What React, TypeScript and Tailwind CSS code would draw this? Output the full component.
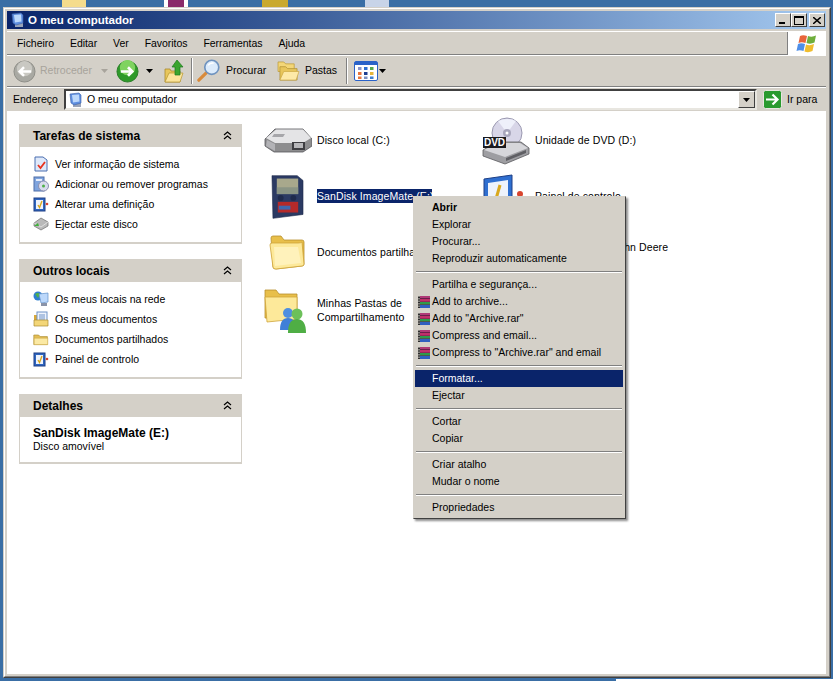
import type { ReactNode } from "react";

const font = "font-['Liberation_Sans',Arial,sans-serif]";

const Computer = ({ s = 16 }: { s?: number }) => (
  <svg width={s} height={s} viewBox="0 0 16 16">
    <rect x="5" y="11" width="8" height="4" fill="#9aa4b8" />
    <path d="M2 2 L11 1 L13 3 L13 11 L6 13 L3 11 Z" fill="#5f8fe0" stroke="#3a5fa8" strokeWidth=".6" />
    <path d="M4 3 L11 2.5 L11.5 9.5 L5 10.5 Z" fill="#bcd8fb" />
  </svg>
);

const BackIcon = () => (
  <svg width="23" height="23" viewBox="0 0 24 24">
    <circle cx="12" cy="12" r="11" fill="#a9a9a3" stroke="#8c8c86" />
    <circle cx="12" cy="9" r="8" fill="#c9c8c2" />
    <path d="M19 12H7M11.5 7.5 7 12l4.5 4.5" stroke="#fff" strokeWidth="2.6" fill="none" />
  </svg>
);

const ForwardIcon = () => (
  <svg width="23" height="23" viewBox="0 0 24 24">
    <circle cx="12" cy="12" r="11" fill="#2f9a2a" stroke="#2a7d28" />
    <circle cx="12" cy="8" r="8" fill="#7fd35f" />
    <path d="M5 12h12M12.5 7.5 17 12l-4.5 4.5" stroke="#fff" strokeWidth="2.8" fill="none" />
  </svg>
);

const FolderSmall = ({ w = 20, h = 16 }: { w?: number; h?: number }) => (
  <svg width={w} height={h} viewBox="0 0 20 16">
    <path d="M1 3h6l2 2h9v10H1Z" fill="#e3bd55" stroke="#a98a2f" strokeWidth=".8" />
    <path d="M1.5 7h17v8h-17Z" fill="#fbe9a4" stroke="#c9a440" strokeWidth=".6" />
  </svg>
);

const UpIcon = () => (
  <svg width="20" height="24" viewBox="0 0 20 24">
    <path d="M1 10h5l1 2h9v11H1Z" fill="#e8c65c" stroke="#a98a2f" strokeWidth=".8" />
    <path d="M1 23 5 14h14l-3 9Z" fill="#fbe39a" stroke="#b8962f" strokeWidth=".7" />
    <path d="M13 1 19 8h-3v8h-5V8H8Z" fill="#3aa52f" stroke="#1d7a1d" strokeWidth=".7" />
  </svg>
);

const SearchIcon = () => (
  <svg width="24" height="24" viewBox="0 0 26 26">
    <path d="M10 15 2 23" stroke="#d98a3a" strokeWidth="3.4" strokeLinecap="round" />
    <circle cx="16" cy="9" r="7.6" fill="#dcebfb" stroke="#6f93bf" strokeWidth="1.8" />
    <path d="M12 7q2-3 6-2.5" stroke="#fff" strokeWidth="1.6" fill="none" />
  </svg>
);

const FoldersIcon = () => (
  <svg width="23" height="20" viewBox="0 0 24 21">
    <path d="M1 1h6l2 2h9v8H1Z" fill="#f3d678" stroke="#b8962f" strokeWidth=".7" />
    <path d="M3 6h6l2 2h10v12H3Z" fill="#e8c65c" stroke="#a98a2f" strokeWidth=".7" />
    <path d="M3 20 7 11h16l-3 9Z" fill="#fde9a8" stroke="#c9a440" strokeWidth=".7" />
  </svg>
);

const ViewsIcon = () => (
  <svg width="24" height="20" viewBox="0 0 24 20">
    <rect x=".5" y=".5" width="23" height="19" rx="1.5" fill="#fff" stroke="#2a62c8" />
    <rect x="1" y="1" width="22" height="3" fill="#2a62c8" />
    <rect x="4" y="6" width="3.5" height="3" fill="#8a93c9" />
    <rect x="10" y="6" width="3.5" height="3" fill="#2f6fd0" />
    <rect x="16" y="6" width="3.5" height="3" fill="#56a84f" />
    <rect x="4" y="11" width="3.5" height="3" fill="#e8743b" />
    <rect x="10" y="11" width="3.5" height="3" fill="#1f3f8f" />
    <rect x="16" y="11" width="3.5" height="3" fill="#e5b53a" />
    <rect x="4" y="15.5" width="3.5" height="2.5" fill="#e8743b" />
    <rect x="10" y="15.5" width="3.5" height="2.5" fill="#7c8fc0" />
    <rect x="16" y="15.5" width="3.5" height="2.5" fill="#3f7fd0" />
  </svg>
);

const WinFlag = () => (
  <svg width="22" height="20" viewBox="0 0 22 20">
    <path d="M4 2q3-1.500 7 0l-1.500 7q-4-1.500-7 0Z" fill="#e8643a" />
    <path d="M12 2q4 1.500 8-.5l-1.500 7q-4 2-8 .5Z" fill="#6fae3c" />
    <path d="M2 10q3-1.500 7 0l-1.500 7q-4-1.500-7 0Z" fill="#4f8fe8" />
    <path d="M10 10.500q4 1.500 8-.5l-1.500 7q-4 2-8 .5Z" fill="#f0bd2e" />
  </svg>
);

const GoIcon = () => (
  <svg width="19" height="19" viewBox="0 0 19 19">
    <rect x=".5" y=".5" width="18" height="18" rx="2" fill="#2a9a2f" stroke="#e8e6e0" />
    <path d="M3 9.500h11M9.500 4.500l5 5-5 5" stroke="#fff" strokeWidth="2.200" fill="none" />
  </svg>
);

const Chevrons = () => (
  <svg width="9" height="9" viewBox="0 0 9 9">
    <path d="M1 4 4.500 1 8 4M1 8l3.500-3L8 8" stroke="#000" strokeWidth="1.200" fill="none" />
  </svg>
);

const Caret = ({ c = "#000" }: { c?: string }) => (
  <svg width="7" height="4" viewBox="0 0 7 4">
    <path d="M0 0h7L3.500 4Z" fill={c} />
  </svg>
);

const TaskIcon = ({ kind }: { kind: string }) => {
  if (kind === "info")
    return (
      <svg width="16" height="16" viewBox="0 0 16 16">
        <path d="M2 1h8l4 3v11H2Z" fill="#dfe9fa" stroke="#4a6fb0" />
        <path d="M5 9l2.500 3L12 6" stroke="#e8321e" strokeWidth="1.800" fill="none" />
      </svg>
    );
  if (kind === "add")
    return (
      <svg width="16" height="16" viewBox="0 0 16 16">
        <rect x="1" y="1" width="10" height="14" fill="#7fa4de" stroke="#4f6ea8" />
        <rect x="3" y="3" width="6" height="2" fill="#e8eefa" />
        <circle cx="10.500" cy="10" r="5" fill="#d8dcec" stroke="#8a8fb0" />
        <circle cx="10.500" cy="10" r="1.500" fill="#4fb04a" />
      </svg>
    );
  if (kind === "panel")
    return (
      <svg width="16" height="16" viewBox="0 0 16 16">
        <rect x="1" y="2" width="11" height="13" fill="#2f66c0" stroke="#1e3f85" />
        <rect x="3" y="4" width="7" height="9" fill="#eef3fc" />
        <path d="M5 9l1.500 2.500L9 5" stroke="#d9a81e" strokeWidth="1.400" fill="none" />
        <circle cx="14" cy="8" r="1.300" fill="#d8452e" />
      </svg>
    );
  if (kind === "eject")
    return (
      <svg width="16" height="14" viewBox="0 0 16 14">
        <path d="M1 6 8 1l7 4v4l-7 4-7-4Z" fill="#b9b9b9" stroke="#6f6f6f" strokeWidth=".7" />
        <path d="M1 6l7 4 7-5" stroke="#eee" fill="none" strokeWidth=".7" />
        <path d="M1 9l4-3 1 3Z" fill="#3fb03a" />
      </svg>
    );
  if (kind === "net")
    return (
      <svg width="16" height="16" viewBox="0 0 16 16">
        <circle cx="5" cy="5" r="4.500" fill="#2f7fd0" />
        <path d="M2 3q3-2 5 0l-2 4Z" fill="#4fb04a" />
        <path d="M6 3l9-1v9l-7 1Z" fill="#bcd8fb" stroke="#5f8fc8" strokeWidth=".7" />
        <rect x="8" y="12" width="6" height="3" fill="#8a93a8" />
      </svg>
    );
  if (kind === "docs")
    return (
      <svg width="16" height="16" viewBox="0 0 16 16">
        <path d="M1 4h3v11H1Z" fill="#d9a93a" />
        <rect x="4" y="1" width="10" height="11" fill="#eef3fc" stroke="#6f93c8" />
        <path d="M6 4h6M6 6h6M6 8h6" stroke="#6f93c8" />
        <path d="M1 9h14v6H1Z" fill="#f3d678" stroke="#a98a2f" strokeWidth=".7" />
      </svg>
    );
  return <FolderSmall w={16} h={14} />;
};

const RarIcon = () => (
  <svg width="14" height="14" viewBox="0 0 14 14">
    <rect x="3" y="1" width="10" height="12" fill="#6a1f4a" />
    <rect x="3" y="1" width="10" height="2" fill="#b03a78" />
    <rect x="3" y="4" width="10" height="2.500" fill="#c0306a" />
    <rect x="3" y="7" width="10" height="2.500" fill="#2f9a4a" />
    <rect x="3" y="10" width="10" height="3" fill="#2f5fc0" />
    <path d="M2 1v12M1 2.500h2M1 5h2M1 7.500h2M1 10h2M1 12.500h2" stroke="#222" strokeWidth=".9" />
  </svg>
);

const DriveIcon = () => (
  <svg width="48" height="26" viewBox="0 0 48 26" className="ml-[1px]">
    <path d="M1 12 11 2h28l9 10v7l-9 6H10l-9-6Z" fill="#8d8d8f" stroke="#57575a" strokeWidth=".8" />
    <path d="M2 11 12 2.500h27L47 11l-8 5H11Z" fill="#e4e4e6" />
    <path d="M10 7h11l-2 3H8Z" fill="#a6a6aa" />
    <rect x="28" y="15" width="13" height="8" fill="#3e3e42" />
    <rect x="30" y="16" width="9" height="5" fill="#b7b7ba" />
    <path d="M3 13l8 4v7l-9-5Z" fill="#b2b2b6" />
  </svg>
);

const DvdIcon = () => (
  <svg width="48" height="48" viewBox="0 0 48 48" className="ml-[2px] mt-[2px]">
    <circle cx="25" cy="16" r="15" fill="#d8d6e8" stroke="#9a98b0" />
    <path d="M25 16 16 4q9-4 18 0Z" fill="#eef0fa" />
    <circle cx="25" cy="16" r="4" fill="#a8a6bc" />
    <circle cx="25" cy="16" r="1.500" fill="#fff" />
    <path d="M1 33 15 25h24l8 6v6L23 47 1 39Z" fill="#9e9ea2" stroke="#5a5a5e" strokeWidth=".8" />
    <path d="M2 33l21 7 23-9-8-5H15Z" fill="#d6d6da" />
    <path d="M24 41l20-8v3l-20 8Z" fill="#5f5f64" />
    <rect x="1" y="20" width="23" height="11" fill="#1a1a1e" />
    <text x="12.500" y="29" textAnchor="middle" fontSize="10" fontWeight="700" fill="#fff" fontFamily="Liberation Sans">DVD</text>
  </svg>
);

const CardIcon = () => (
  <svg width="33" height="47" viewBox="0 0 34 47">
    <path d="M1 2h26l6 5v35l-31 4Z" fill="#2b3a63" stroke="#1b2747" strokeWidth=".6" />
    <rect x="6" y="5" width="22" height="16" fill="#a8a88c" />
    <rect x="6" y="14" width="22" height="7" fill="#8a9484" />
    <circle cx="10" cy="25" r="3" fill="#1f2b4d" />
    <circle cx="23" cy="25" r="3" fill="#1f2b4d" />
    <rect x="7" y="29" width="21" height="11" fill="#b52a2a" />
    <rect x="8" y="33" width="12" height="4" fill="#3f68b0" />
  </svg>
);

const BigFolder = ({ w = 38, h = 38 }: { w?: number; h?: number }) => (
  <svg width={w} height={h} viewBox="0 0 38 38">
    <path d="M3 5q0-2 2-2h8l3 4h18q2 0 2 2v22q0 2-2 2L8 36q-3 0-3-2Z" fill="#e8bf4a" stroke="#b8912e" strokeWidth=".8" />
    <path d="M2 12q0-2 2-2h26q3 0 4-1l2 22q0 2-2 2L8 36q-3 0-3-2Z" fill="#fde99a" stroke="#cfa53a" strokeWidth=".8" />
    <path d="M6 14h24l3 16-26 3Z" fill="#fff5c9" opacity=".7" />
  </svg>
);

const SharedFolder = () => (
  <svg width="46" height="46" viewBox="0 0 46 46">
    <path d="M1 3h11l3 4h18v24H1Z" fill="#e8bf4a" stroke="#b8912e" strokeWidth=".8" />
    <path d="M1 10h32v22L3 35Z" fill="#fde99a" stroke="#cfa53a" strokeWidth=".8" />
    <circle cx="24" cy="26" r="5" fill="#4f8fe0" />
    <path d="M16 43q0-12 8-12t8 12Z" fill="#3f7fd8" />
    <circle cx="33" cy="27" r="5.500" fill="#6cc05a" />
    <path d="M24 46q0-14 9-14t9 14Z" fill="#4fae45" />
  </svg>
);

const ControlPanel = () => (
  <svg width="46" height="46" viewBox="0 0 46 46">
    <path d="M2 6 30 2v38L2 44Z" fill="#2f6fd0" stroke="#1e3f85" />
    <path d="M6 10 26 7v28L6 39Z" fill="#eef3fc" />
    <path d="M18 12l-4 14" stroke="#d9a81e" strokeWidth="3" />
    <circle cx="38" cy="21" r="3" fill="#d8452e" />
  </svg>
);

const Separator = () => <div className="w-[2px] h-[26px] border-l border-r border-l-[#808080] border-r-white" />;

const Panel = ({ title, children }: { title: string; children: ReactNode }) => (
  <div className="w-[223px] mb-[15px]">
    <div className="h-[23px] bg-[#d4d0c8] flex items-center justify-between pl-[14px] pr-[10px]">
      <span className="text-[12px] font-bold text-black pt-[1px]">{title}</span>
      <Chevrons />
    </div>
    <div className="bg-white border border-t-0 border-[#d4d0c8] border-b-2 pt-[7px] pb-[8px]">{children}</div>
  </div>
);

const TaskRow = ({ icon, label }: { icon: string; label: string }) => (
  <div className="h-[20px] flex items-center text-[10.5px] text-black pl-[13px]">
    <div className="w-[16px] flex justify-center"><TaskIcon kind={icon} /></div>
    <span className="ml-[6px] pt-[1px]">{label}</span>
  </div>
);

const FileItem = ({ icon, children }: { icon: ReactNode; children: ReactNode }) => (
  <div className="flex items-center h-[56px] w-[218px]">
    <div className="w-[50px] flex justify-center shrink-0">{icon}</div>
    <div className="ml-[5px] text-[10.5px] tracking-[0.1px] leading-[14px] text-black whitespace-nowrap">{children}</div>
  </div>
);

const MenuRow = ({ label, bold, rar, active }: { label: string; bold?: boolean; rar?: boolean; active?: boolean }) => (
  <div className={`h-[17px] flex items-center text-[10.5px] ${active ? "bg-[#0a246a] text-white" : "text-black"} ${bold ? "font-bold" : ""}`}>
    <div className="w-[17px] flex justify-end pr-[1px]">{rar && <RarIcon />}</div>
    <span>{label}</span>
  </div>
);

const MenuSep = () => (
  <div className="h-[9px] flex items-center px-[1px]">
    <div className="w-full h-[2px] border-t border-b border-t-[#808080] border-b-white" />
  </div>
);

export default function App() {
  return (
    <div className={`${font} relative w-[833px] h-[681px] bg-[#3a6ea5] overflow-hidden pt-[7px] pl-[3px]`}>
      {/* bits of the desktop behind the window */}
      <div className="absolute left-[62px] top-0 w-[24px] h-[7px] bg-[#f5dc8c]" />
      <div className="absolute left-[164px] top-0 w-[24px] h-[7px] bg-white"><div className="mx-[4px] h-[7px] bg-[#8a2a6a]" /></div>
      <div className="absolute left-[262px] top-0 w-[26px] h-[7px] bg-[#c9a92e]" />
      <div className="absolute left-[365px] top-0 w-[24px] h-[7px] bg-[#c8d4e8]" />
      <div className="absolute left-[616px] top-[679px] w-[217px] h-[2px] bg-white" />

      {/* window */}
      <div className="w-[828px] h-[671px] border border-t-[#d4d0c8] border-l-[#d4d0c8] border-r-[#404040] border-b-[#404040]">
        <div className="h-full border border-t-white border-l-white border-r-[#808080] border-b-[#808080] bg-[#d4d0c8] p-[2px] pr-[3px] flex flex-col">
          {/* title bar */}
          <div className="h-[18px] shrink-0 bg-gradient-to-r from-[#0a246a] to-[#a6caf0] flex items-center pl-[3px] pr-[1px]">
            <Computer />
            <span className="ml-[2px] pt-[1px] text-[11.5px] font-bold text-white">O meu computador</span>
            <div className="ml-auto flex">
              {["min", "max", "close"].map((b) => (
                <div key={b} className={`w-[16px] h-[14px] bg-[#d4d0c8] border border-t-white border-l-white border-r-[#404040] border-b-[#404040] flex items-center justify-center ${b === "max" ? "mr-[2px]" : ""}`}>
                  {b === "min" && <div className="w-[6px] h-[2px] bg-black mt-[6px] mr-[2px]" />}
                  {b === "max" && <div className="w-[10px] h-[9px] border border-t-2 border-black" />}
                  {b === "close" && (
                    <svg width="8" height="7" viewBox="0 0 8 7"><path d="M0 0l8 7M8 0 0 7" stroke="#000" strokeWidth="1.500" /></svg>
                  )}
                </div>
              ))}
            </div>
          </div>

          {/* menu bar */}
          <div className="mt-[2px] h-[24px] shrink-0 border-t border-b border-t-white border-b-[#808080] flex items-center pl-[10px] text-[10.5px] tracking-[-0.05px] text-black relative">
            <div className="flex gap-[16px] pt-[1px]">
              {["Ficheiro", "Editar", "Ver", "Favoritos", "Ferramentas", "Ajuda"].map((m) => (
                <span key={m}>{m}</span>
              ))}
            </div>
            <div className="absolute right-0 top-0 bottom-[-1px] w-[39px] bg-white border-l border-l-[#808080] flex items-center justify-center">
              <WinFlag />
            </div>
          </div>

          {/* toolbar */}
          <div className="h-[32px] shrink-0 border-t border-b border-t-white border-b-[#808080] flex items-center pl-[6px] text-[10.5px] text-black">
            <BackIcon />
            <span className="ml-[4px] w-[55px] text-[#a8a49c]">Retroceder</span>
            <div className="ml-[6px]"><Caret c="#a8a49c" /></div>
            <div className="ml-[8px]"><ForwardIcon /></div>
            <div className="ml-[7px]"><Caret /></div>
            <div className="ml-[11px]"><UpIcon /></div>
            <div className="ml-[7px]"><Separator /></div>
            <div className="ml-[4px]"><SearchIcon /></div>
            <span className="ml-[5px] w-[41px]">Procurar</span>
            <div className="ml-[10px]"><FoldersIcon /></div>
            <span className="ml-[5px] w-[32px]">Pastas</span>
            <div className="ml-[9px]"><Separator /></div>
            <div className="ml-[6px]"><ViewsIcon /></div>
            <div className="ml-[1px]"><Caret /></div>
          </div>

          {/* address bar */}
          <div className="h-[24px] shrink-0 border-t border-t-white flex items-center pl-[6px] text-[10.5px] text-black">
            <span className="w-[51px]">Endereço</span>
            <div className="w-[693px] h-[21px] bg-white border-2 border-t-[#404040] border-l-[#404040] border-r-[#e8e6e0] border-b-[#e8e6e0] flex items-center pl-[2px]">
              <Computer />
              <span className="ml-[3px]">O meu computador</span>
              <div className="ml-auto w-[17px] h-[17px] bg-[#d4d0c8] border border-t-white border-l-white border-r-[#404040] border-b-[#404040] flex items-center justify-center">
                <Caret />
              </div>
            </div>
            <div className="ml-[6px]"><GoIcon /></div>
            <span className="ml-[5px]">Ir para</span>
          </div>

          {/* content */}
          <div className="flex-1 bg-white flex pl-[12px] relative">
            <div className="w-[223px] shrink-0 pt-[13px]">
              <Panel title="Tarefas de sistema">
                <TaskRow icon="info" label="Ver informação de sistema" />
                <TaskRow icon="add" label="Adicionar ou remover programas" />
                <TaskRow icon="panel" label="Alterar uma definição" />
                <TaskRow icon="eject" label="Ejectar este disco" />
              </Panel>
              <Panel title="Outros locais">
                <TaskRow icon="net" label="Os meus locais na rede" />
                <TaskRow icon="docs" label="Os meus documentos" />
                <TaskRow icon="folder" label="Documentos partilhados" />
                <TaskRow icon="panel" label="Painel de controlo" />
              </Panel>
              <Panel title="Detalhes">
                <div className="pl-[13px] text-[10.5px] leading-[13px] text-black pt-[3px] pb-[1px]">
                  <div className="font-bold text-[12px]">SanDisk ImageMate (E:)</div>
                  <div>Disco amovível</div>
                </div>
              </Panel>
            </div>

            <div className="ml-[20px] pt-[1px] grid grid-cols-2 w-[436px] h-fit">
              <FileItem icon={<DriveIcon />}>Disco local (C:)</FileItem>
              <FileItem icon={<DvdIcon />}>Unidade de DVD (D:)</FileItem>
              <FileItem icon={<CardIcon />}><span className="bg-[#0a246a] text-white inline-block w-[115px]">SanDisk ImageMate (E:)</span></FileItem>
              <FileItem icon={<ControlPanel />}>Painel de controlo</FileItem>
              <FileItem icon={<BigFolder />}>Documentos partilhados</FileItem>
              <FileItem icon={<BigFolder />}><span className="block mb-[10px]">Documentos de John Deere</span></FileItem>
              <div className="mt-[2px]">
                <FileItem icon={<SharedFolder />}>Minhas Pastas de<br />Compartilhamento</FileItem>
              </div>
            </div>

            {/* context menu */}
            <div className="absolute left-[406px] top-[85px] w-[213px] bg-[#d4d0c8] border border-t-[#d4d0c8] border-l-[#d4d0c8] border-r-[#404040] border-b-[#404040] p-[2px] pl-[1px] shadow-[2px_2px_2px_rgba(0,0,0,0.45)]">
              <MenuRow label="Abrir" bold />
              <MenuRow label="Explorar" />
              <MenuRow label="Procurar..." />
              <MenuRow label="Reproduzir automaticamente" />
              <MenuSep />
              <MenuRow label="Partilha e segurança..." />
              <MenuRow rar label="Add to archive..." />
              <MenuRow rar label='Add to "Archive.rar"' />
              <MenuRow rar label="Compress and email..." />
              <MenuRow rar label='Compress to "Archive.rar" and email' />
              <MenuSep />
              <MenuRow active label="Formatar..." />
              <MenuRow label="Ejectar" />
              <MenuSep />
              <MenuRow label="Cortar" />
              <MenuRow label="Copiar" />
              <MenuSep />
              <MenuRow label="Criar atalho" />
              <MenuRow label="Mudar o nome" />
              <MenuSep />
              <MenuRow label="Propriedades" />
            </div>
          </div>
        </div>
      </div>
    </div>
  );
}
